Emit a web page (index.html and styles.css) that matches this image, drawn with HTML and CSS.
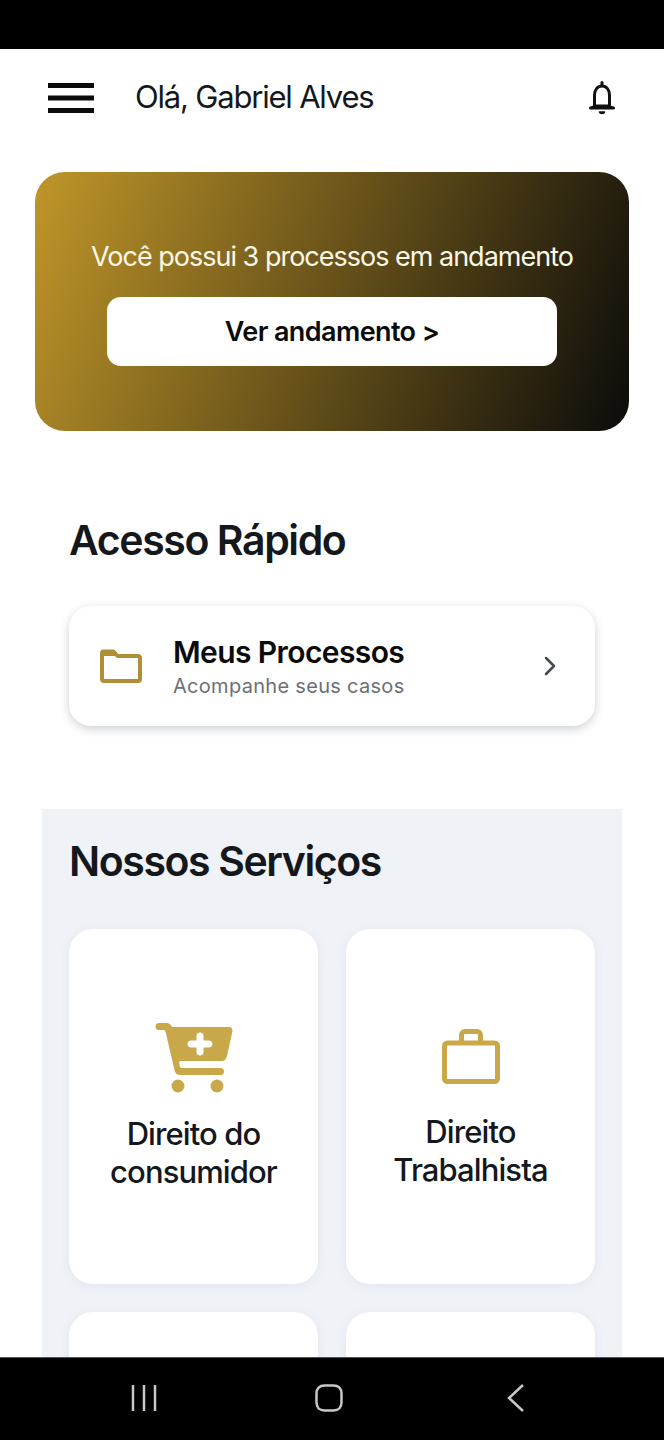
FILE: index.html
```html
<!DOCTYPE html>
<html lang="pt-BR">
  <head>
    <meta charset="UTF-8" />
    <meta name="viewport" content="width=device-width, initial-scale=1.0" />
    <title>Início</title>
    <link rel="stylesheet" href="styles.css">
  </head>
  <body>
    <div class="status-bar"></div>

    <div class="screen">
      <!-- Header -->
      <header class="header">
        <svg class="menu-icon" width="46" height="31" viewBox="0 0 46 31">
          <rect x="0" y="1" width="46" height="5" />
          <rect x="0" y="13.500" width="46" height="5" />
          <rect x="0" y="26" width="46" height="5" />
        </svg>
        <div class="greeting">Olá, Gabriel Alves</div>
        <svg class="bell-icon" width="30" height="36" viewBox="0 0 30 36" fill="none" stroke="#111" stroke-width="3" stroke-linejoin="round">
          <path d="M15 3.500v3" stroke-linecap="round" />
          <path d="M7.500 27V16C7.500 11 10.500 7 15 7s7.500 4 7.500 9v11" />
          <path d="M3.500 29c2.500-.5 3.500-1 4-2h15c.5 1 1.500 1.500 4 2z" />
          <path d="M12.500 33c.5 2 4.500 2 5 0z" fill="#111" stroke-width="1.500" />
        </svg>
      </header>

      <!-- Banner -->
      <section class="banner">
        <p class="banner-text">Você possui 3 processos em andamento</p>
        <button class="banner-button">Ver andamento &gt;</button>
      </section>

      <!-- Acesso rapido -->
      <section class="quick">
        <h2 class="section-title">Acesso Rápido</h2>
        <div class="quick-card">
          <svg class="folder-icon" width="42" height="34" viewBox="0 0 42 34" fill="none">
            <path d="M3 2.500h10.500l4 4.500H38a2 2 0 0 1 2 2v21a2 2 0 0 1-2 2H4a2 2 0 0 1-2-2V3.500a1 1 0 0 1 1-1z" stroke="#b08d37" stroke-width="4" stroke-linejoin="round" />
            <path d="M3 2h10.500l4 5H2V3a1 1 0 0 1 1-1z" fill="#b08d37" />
          </svg>
          <div class="quick-text">
            <div class="quick-title">Meus Processos</div>
            <div class="quick-sub">Acompanhe seus casos</div>
          </div>
          <svg class="chevron" width="14" height="20" viewBox="0 0 14 20" fill="none" stroke="#454a50" stroke-width="2.500" stroke-linecap="round" stroke-linejoin="round">
            <path d="M3 2l8 8-8 8" />
          </svg>
        </div>
      </section>

      <!-- Servicos -->
      <section class="services">
        <h2 class="section-title">Nossos Serviços</h2>
        <div class="service-grid">
          <div class="service-card">
            <svg class="cart-icon" width="78" height="70" viewBox="0 0 78 70">
              <path fill-rule="evenodd" fill="#c9a84a" d="M4 0h7c3 0 5 1.500 6 4H74c2.500 0 4 2 3.400 4.500l-5.500 25c-.5 2.500-2.500 4.500-5 4.500H26c-1.500 0-2 1-1.800 2l.5 3c.3 1.300 1 2 2.500 2H65.500a3.500 3.500 0 0 1 0 7H25c-3 0-5-2-5.500-5L10.500 8.500C10 7 9.500 7 8.500 7H4a3.500 3.500 0 0 1 0-7zM45 9.500c-2 0-3.500 1.300-3.500 3v5H36c-1.800 0-3.500 1.500-3.500 3.500s1.700 3.500 3.500 3.500h5.500v5c0 1.700 1.500 3 3.500 3s3.500-1.300 3.500-3v-5H54c1.800 0 3.500-1.500 3.500-3.500s-1.700-3.500-3.500-3.500h-5.500v-5c0-1.700-1.500-3-3.500-3z" />
              <circle cx="23" cy="63" r="6.500" fill="#c9a84a" />
              <circle cx="62" cy="63" r="6.500" fill="#c9a84a" />
            </svg>
            <div class="service-name">Direito do consumidor</div>
          </div>
          <div class="service-card">
            <svg class="case-icon" width="58" height="55" viewBox="0 0 58 55" fill="none" stroke="#c9a84a" stroke-width="5" stroke-linejoin="round">
              <rect x="2.500" y="14" width="53" height="38.500" rx="3" />
              <path d="M19.500 14V6A3.500 3.500 0 0 1 23 2.500h12A3.500 3.500 0 0 1 38.500 6v8" />
            </svg>
            <div class="service-name">Direito Trabalhista</div>
          </div>
          <div class="service-card"></div>
          <div class="service-card"></div>
        </div>
      </section>
    </div>

    <nav class="nav-bar">
      <svg width="28" height="28" viewBox="0 0 28 28" stroke="#c8c8c8" stroke-width="2.500" fill="none">
        <path d="M3 1v26M14 1v26M25 1v26" />
      </svg>
      <svg class="home-icon" width="30" height="30" viewBox="0 0 30 30" stroke="#c8c8c8" stroke-width="2.500" fill="none">
        <path d="M9.500 2.500h9c5 0 8 3 8 8v9c0 5-3 8-8 8h-9c-5 0-8-3-8-8v-9c0-5 3-8 8-8z" />
      </svg>
      <svg width="20" height="30" viewBox="0 0 20 30" stroke="#c8c8c8" stroke-width="2.500" fill="none">
        <path d="M17 2L3 15l14 13" />
      </svg>
    </nav>
  </body>
</html>
```

FILE: styles.css
```css
* {
  box-sizing: border-box;
}
body {
  margin: 0;
  height: 100vh;
  display: flex;
  flex-direction: column;
  overflow: hidden;
  background-color: white;
  font-family: Inter, "Liberation Sans", sans-serif;
  color: #14181c;
}
.status-bar {
  height: 49px;
  flex-shrink: 0;
  background-color: black;
}
.screen {
  flex: 1;
  overflow: hidden;
}
.header {
  display: flex;
  align-items: center;
  height: 96px;
  padding: 0 47px 0 48px;
}
.menu-icon {
  flex-shrink: 0;
  fill: #0b0b0b;
}
.greeting {
  flex: 1;
  margin-left: 41px;
  padding-bottom: 2px;
  font-size: 31px;
  letter-spacing: -1.2px;
}
.banner {
  display: flex;
  flex-direction: column;
  align-items: center;
  margin: 27px 35px 0;
  height: 259px;
  padding-top: 68px;
  border-radius: 30px;
  background: linear-gradient(110deg, #c09629 0%, #0b0b0a 100%);
}
.banner-text {
  margin: 0;
  font-size: 27px;
  letter-spacing: -1px;
  color: #fbf7e6;
}
.banner-button {
  width: 450px;
  height: 69px;
  margin-top: 24px;
  border: none;
  border-radius: 14px;
  background-color: white;
  font-family: inherit;
  font-size: 27px;
  font-weight: 600;
  letter-spacing: -0.6px;
  color: #0b0b0b;
}
.quick {
  padding: 0 69px;
  margin-top: 82px;
}
.section-title {
  margin: 0;
  font-size: 41px;
  line-height: 54px;
  font-weight: 600;
  letter-spacing: -1.4px;
}
.quick-card {
  display: flex;
  align-items: center;
  height: 120px;
  margin-top: 39px;
  padding: 0 38px 0 31px;
  border-radius: 22px;
  background-color: white;
  box-shadow: 0 3px 10px rgba(30, 40, 60, 0.22);
}
.folder-icon {
  flex-shrink: 0;
}
.quick-text {
  flex: 1;
  margin-left: 31px;
}
.quick-title {
  font-size: 30px;
  line-height: 36px;
  font-weight: 600;
  letter-spacing: -0.6px;
  color: #0b0b0b;
}
.quick-sub {
  margin-top: 3px;
  font-size: 20px;
  line-height: 26px;
  letter-spacing: 0.3px;
  color: #6b7076;
}
.services {
  margin: 83px 42px 0;
  padding: 25px 27px 0;
  background-color: #eff2f7;
}
.service-grid {
  display: grid;
  grid-template-columns: repeat(2, 1fr);
  gap: 28px;
  margin-top: 41px;
}
.service-card {
  display: flex;
  flex-direction: column;
  align-items: center;
  height: 355px;
  padding-top: 94px;
  border-radius: 24px;
  background-color: white;
  box-shadow: 0 2px 12px rgba(30, 40, 60, 0.06);
}
.service-name {
  margin-top: 22px;
  padding: 0 30px;
  text-align: center;
  font-size: 31px;
  line-height: 38px;
  font-weight: 500;
  letter-spacing: -0.9px;
  color: #14181c;
}
.case-icon {
  margin-top: 6px;
  margin-bottom: 7px;
}
.nav-bar {
  display: flex;
  align-items: center;
  height: 83px;
  flex-shrink: 0;
  padding-bottom: 3px;
  justify-content: space-between;
  padding-left: 130px;
  padding-right: 138px;
  background-color: black;
  border-top: 1px solid #555;
}
.home-icon {
  margin-right: 4px;
}
```
